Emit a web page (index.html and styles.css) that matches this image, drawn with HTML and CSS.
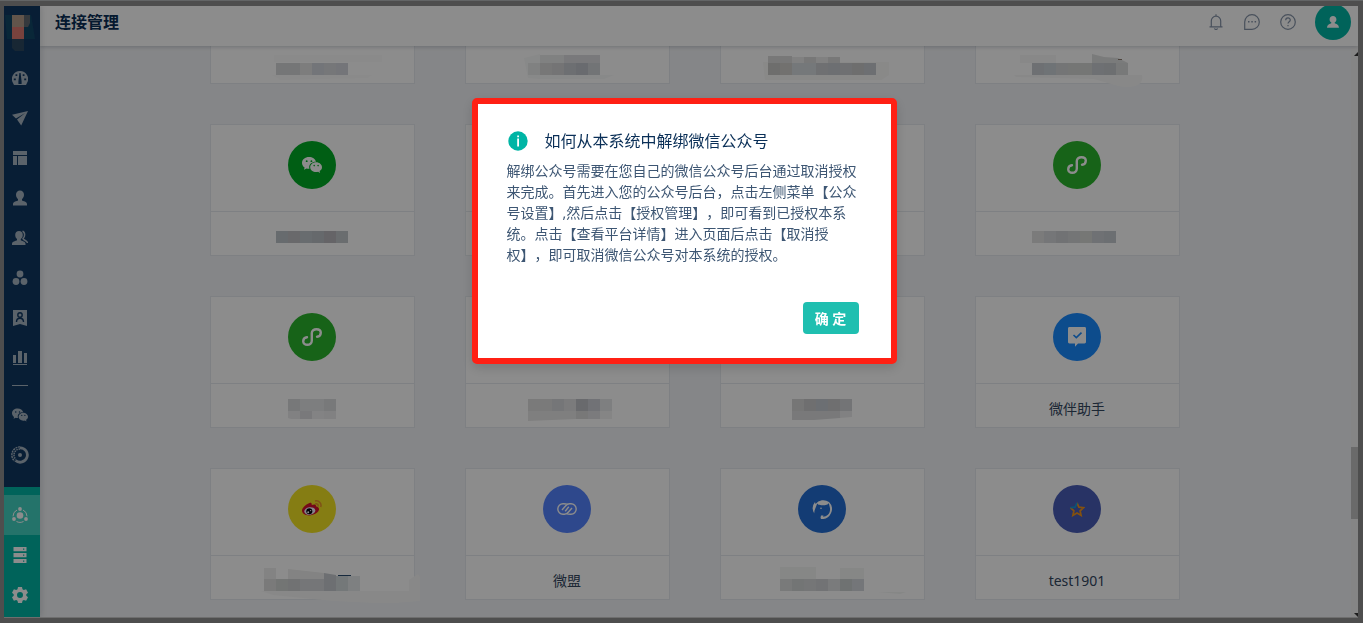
FILE: index.html
```html
<!DOCTYPE html>
<html lang="zh-CN">
<head>
<meta charset="utf-8">
<title>连接管理</title>
<link rel="stylesheet" href="styles.css">
</head>
<body>
<svg class="defs" width="0" height="0" aria-hidden="true">
  <symbol id="wechat" viewBox="0 0 20 20">
    <path fill="currentColor" fill-rule="evenodd" d="M7 2C3.100 2 0 4.600 0 7.900c0 1.900 1 3.500 2.600 4.600L2 14.800l2.600-1.400c.8.200 1.600.4 2.400.4h.5A5.600 5.600 0 0 1 7.200 12c0-3 2.900-5.300 6.400-5.300h.4C13.300 4 10.500 2 7 2ZM4.700 5.200a.9.900 0 1 1 0 1.900.9.900 0 0 1 0-1.900Zm4.700 0a.9.900 0 1 1 0 1.900.9.900 0 0 1 0-1.900ZM20 12.200c0-2.700-2.700-4.900-5.900-4.900s-5.900 2.200-5.900 4.900 2.700 4.900 5.900 4.900c.7 0 1.400-.1 2-.3l2 1.200-.5-2c1.500-.9 2.400-2.200 2.400-3.800Zm-7.800-2.400a.8.800 0 1 1 0 1.600.8.800 0 0 1 0-1.600Zm3.900 0a.8.800 0 1 1 0 1.600.8.800 0 0 1 0-1.600Z"/>
  </symbol>
  <symbol id="mini" viewBox="0 0 20 20">
    <path fill="none" stroke="currentColor" stroke-width="2.400" stroke-linecap="round" d="M5 10.200a4.200 4.200 0 0 0-3.800 4C1.200 16.300 3 17.800 5.300 17.800s4.500-1.500 4.500-4V6c0-2.300 2.100-3.800 4.600-3.800 2.400 0 4.400 1.300 4.400 3.500a4.200 4.200 0 0 1-3.800 4"/>
  </symbol>
</svg>
<div class="app">
  <nav class="sidebar" aria-label="主导航">
    <a class="logo" href="#" aria-label="首页">
      <svg width="32" height="38" viewBox="0 0 32 38"><path fill="#124767" d="M1 1h26l4 24H3Z"/><path fill="#b39b89" d="M8 1h12v12H8Z"/><path fill="#62696f" d="M20 1h6v8l-2 4h-4Z"/><path fill="#da786f" d="M8 13h12v12H8Z"/><path fill="#2c475f" d="M8 25h12v12h-9l-3-3Z"/></svg>
    </a>
    <div class="menu">
      <a href="#" aria-label="仪表盘"><svg width="16" height="16" viewBox="0 0 16 16"><path fill="currentColor" fill-rule="evenodd" d="M8 1a8 8 0 0 0-7 12l1 2h12l1-2A8 8 0 0 0 8 1ZM7.400 3h1.200l1 8.500V14H6.400v-2.500ZM3.500 4.200h1.800V6H3.500Zm7.200 0h1.800V6h-1.800ZM1.800 8.500h2v1.800h-2Zm10.400 0h2v1.800h-2Z"/></svg></a>
      <a href="#" aria-label="推送"><svg width="16" height="16" viewBox="0 0 16 16"><path fill="currentColor" d="M16 1 0 4.800l4 3.700L13.200 3 5 9.500l4.200 6Z"/></svg></a>
      <a href="#" aria-label="页面"><svg width="16" height="16" viewBox="0 0 16 16"><path fill="currentColor" d="M1 1h14v4H1ZM1 6h4v9H1ZM6 6h9v9H6Z"/></svg></a>
      <a href="#" aria-label="联系人"><svg width="16" height="16" viewBox="0 0 16 16"><path fill="currentColor" d="M8 0.500c2.300 0 4 1.700 4 4.300 0 2-.9 3.500-2 4.400v1.300c1 .8 5 1 5 3.500v1.500H1V14c0-2.500 4-2.700 5-3.500V9.200c-1.100-.9-2-2.400-2-4.400C4 2.200 5.700.5 8 .5Z"/></svg></a>
      <a href="#" aria-label="群组"><svg width="16" height="16" viewBox="0 0 16 16"><path fill="currentColor" d="M7 1c2.200 0 3.800 1.500 3.800 4 0 1.900-.8 3.300-2 4v1.300c1 .8 4.700 1.200 4.700 3.500V15H0v-1.200C0 11.500 4 11 5 10.300V9C4 8.300 3.200 6.900 3.200 5 3.200 2.500 4.800 1 7 1Z"/><path fill="none" stroke="currentColor" stroke-width="1.500" d="M10.500 1.200c3 1 2.500 5.800.5 7.300.5 2 4 1.500 4.500 4.500"/></svg></a>
      <a href="#" aria-label="分组"><svg width="16" height="16" viewBox="0 0 16 16" fill="currentColor"><circle cx="8" cy="4" r="3.400"/><circle cx="4" cy="11.500" r="3.400"/><circle cx="12" cy="11.500" r="3.400"/></svg></a>
      <a href="#" aria-label="会员"><svg width="16" height="16" viewBox="0 0 16 16"><path fill="currentColor" d="M1 0h14v16l-7-2-7 2Z"/><g fill="none" stroke="#0f3862" stroke-width="1.400"><circle cx="8" cy="5" r="2.200"/><path d="M4.500 12c0-5 7-5 7 0M9 8l2 2"/></g></svg></a>
      <a href="#" aria-label="统计"><svg width="16" height="16" viewBox="0 0 16 16"><path fill="currentColor" d="M1 5h3v8H1ZM6 1h4v12H6ZM12 3h3v10h-3ZM1 14h14v1H1Z"/></svg></a>
      <hr>
      <a href="#" aria-label="微信"><svg width="16" height="16"><use href="#wechat"/></svg></a>
      <a href="#" aria-label="应用"><svg width="18" height="18" viewBox="0 0 18 18" fill="none" stroke="currentColor"><path stroke-width="2.800" d="M9 1.800a7.200 7.200 0 1 1-4.500 12.700"/><path stroke-width="1.400" stroke-dasharray="2 .7" d="M9 .9a8.100 8.100 0 0 0-5.500 14.100"/><path stroke-width="1.500" stroke-dasharray="1.500 .8" d="M9 3a6 6 0 0 0-4 10.500"/><circle cx="9" cy="9" r="2" fill="currentColor" stroke="none"/></svg></a>
    </div>
    <div class="menu menu-settings">
      <a class="active" href="#" aria-label="连接管理"><svg width="16" height="16" viewBox="0 0 16 16" fill="currentColor"><circle cx="8" cy="8.500" r="3.300"/><circle cx="8" cy="2" r="1.900"/><circle cx="2" cy="12" r="1.900"/><circle cx="14" cy="12" r="1.900"/><path fill="none" stroke="currentColor" d="M5 3A7 7 0 0 0 1 9.300M11 3a7 7 0 0 1 4 6.300M4.500 14.500c2.200 1.200 4.800 1.200 7 0"/></svg></a>
      <a href="#" aria-label="数据"><svg width="16" height="16" viewBox="0 0 16 16"><path fill="currentColor" fill-rule="evenodd" d="M1.500 0h13v4.200h-13Zm9.500 1.500v1.300h1.300V1.500ZM1.500 6h13v4.200h-13ZM11 7.500v1.300h1.300V7.500ZM1.500 12h13v4h-13Zm9.500 1.400v1.300h1.300v-1.300Z"/></svg></a>
      <a href="#" aria-label="设置"><svg width="16" height="16" viewBox="0 0 16 16"><path fill="currentColor" fill-rule="evenodd" d="M6 0h4l.5 2.300 1.300.8 2.300-.8 1.900 3.400L14.300 7.300v1.400L16 10.300l-1.900 3.400-2.300-.8-1.300.8L10 16H6l-.5-2.300-1.300-.8-2.300.8L0 10.300l1.700-1.600V7.300L0 5.700l1.900-3.400 2.300.8 1.300-.8ZM8 5a3 3 0 1 0 0 6 3 3 0 0 0 0-6Z"/></svg></a>
    </div>
  </nav>

  <div class="page">
    <header class="topbar">
      <h1>连接管理</h1>
      <div class="tools">
        <button type="button" aria-label="通知"><svg width="16" height="16" viewBox="0 0 16 16"><path d="M3.300 12.500V7A4.700 4.700 0 0 1 8 2.200 4.700 4.700 0 0 1 12.700 7v5.500M1.500 12.800h13M6.300 14.500a2 2 0 0 0 3.400 0M8 .3v2"/></svg></button>
        <button type="button" aria-label="消息"><svg width="16" height="16" viewBox="0 0 16 16"><path d="M.7 15.300V8A7.300 7.300 0 1 1 8 15.300Z"/><path stroke-width="1.500" d="M4 7.800h1.500M7.300 7.800h1.500M10.600 7.800h1.500"/></svg></button>
        <button type="button" aria-label="帮助"><svg width="16" height="16" viewBox="0 0 16 16"><circle cx="8" cy="8" r="7.300"/><path d="M5.700 6.300C5.700 3.200 10.300 3.200 10.300 6c0 1.700-2.300 1.900-2.300 3.600M8 11v1.300"/></svg></button>
        <button class="avatar" type="button" aria-label="账号"><svg width="14" height="14" viewBox="0 0 16 16"><path fill="currentColor" stroke="none" d="M8 1c2.300 0 3.900 1.600 3.900 4 0 1.500-.8 2.700-1.900 3.400v1c1.300.7 4.800 1.600 4.800 5.100H1.200c0-3.500 3.500-4.400 4.800-5.100v-1C4.900 7.700 4.100 6.500 4.100 5c0-2.400 1.600-4 3.900-4Z"/></svg></button>
      </div>
    </header>

    <div class="body">
      <main class="content">
        <div class="grid">
          <article class="card"><div class="card-top"></div><div class="card-foot">
            <svg class="mosaic" viewBox="0 0 203 43"><path fill="#fcfcfc" d="M63 15h108v7H63ZM61 35h100l-5 3-50 1-36 1Z"/><path fill="#d6d7d9" d="M65 23h24v12H65Z"/><path fill="#e3e3e3" d="M89 23h12v12H89Z"/><path fill="#d2d5dc" d="M101 23h12v12h-12Z"/><path fill="#d8d9dd" d="M113 23h12v12h-12Z"/><path fill="#d3d5dc" d="M125 23h12v12h-12Z"/></svg></div></article>
          <article class="card"><div class="card-top"></div><div class="card-foot">
            <svg class="mosaic" viewBox="0 0 203 43"><path fill="#f8f9f9" d="M58 18l16-4v25l-12-1ZM74 35h74l-10 4H74Z"/><path fill="#e9ebeb" d="M62 23h12v12H62ZM74 15h24v8H74Z"/><path fill="#d9d9d9" d="M74 23h12v12H74Z"/><path fill="#d3d4d5" d="M86 23h12v12H86Z"/><path fill="#dcdde0" d="M98 15h36v8H98Z"/><path fill="#c7cacf" d="M98 23h12v12H98Z"/><path fill="#bfc3cb" d="M110 23h12v12h-12Z"/><path fill="#d0d3d8" d="M122 23h12v12h-12Z"/></svg></div></article>
          <article class="card"><div class="card-top"></div><div class="card-foot">
            <svg class="mosaic" viewBox="0 0 203 43"><path fill="#f9f9f8" d="M42 22h126v13l-8 5H44Z"/><path fill="#dadada" d="M47 16h24v7H47ZM83 17h12v6H83ZM107 17h12v6h-12Z"/><path fill="#ececec" d="M71 17h12v6H71ZM95 17h12v6H95Z"/><path fill="#c8c8c7" d="M47 23h12v12H47Z"/><path fill="#cfcecb" d="M59 23h12v12H59Z"/><path fill="#d5dade" d="M71 23h12v12H71ZM83 23h12v12H83Z"/><path fill="#cbcdd0" d="M95 23h12v12H95ZM119 23h12v12h-12Z"/><path fill="#c6cbd0" d="M107 23h12v12h-12ZM143 23h12v12h-12Z"/><path fill="#c8c9c9" d="M131 23h12v12h-12Z"/></svg></div></article>
          <article class="card"><div class="card-top"></div><div class="card-foot">
            <svg class="mosaic" viewBox="0 0 203 43"><path fill="#f8f8f8" d="M38 35h128c2 10-7 14-24 11l-24-7-78-2ZM44 15h36v8H44Z"/><path fill="#dfe0e0" d="m116 14 12 3 14 1 10 5h-36Z"/><path fill="#c9ccd1" d="M56 23h12v12H56ZM116 23h12v12h-12Z"/><path fill="#cbd2d7" d="M68 23h12v12H68Z"/><path fill="#d3d5d8" d="M80 23h12v12H80Z"/><path fill="#d5d7d6" d="M92 23h24v12H92Z"/><path fill="#c7cace" d="M128 23h12v12h-12Z"/><path fill="#dadcdd" d="M140 23h12v12h-12Z"/><path fill="#8b7a70" d="M142 19h4v1h-4Z"/></svg></div></article>

          <article class="card"><div class="card-top"><span class="badge green"><svg width="20" height="20"><use href="#wechat"/></svg></span></div><div class="card-foot">
            <svg class="mosaic" viewBox="0 0 203 43"><path fill="#bcc3c8" d="M65 19h12v12H65Z"/><path fill="#bfbfc4" d="M77 19h12v12H77Z"/><path fill="#bdc5ca" d="M89 19h12v12H89Z"/><path fill="#bac0c5" d="M101 19h12v12h-12Z"/><path fill="#b9b7bc" d="M113 19h12v12h-12Z"/><path fill="#c1c7ca" d="M125 19h12v12h-12Z"/></svg></div></article>
          <article class="card"><div class="card-top"></div><div class="card-foot"></div></article>
          <article class="card"><div class="card-top"></div><div class="card-foot"></div></article>
          <article class="card"><div class="card-top"><span class="badge leaf"><svg width="20" height="20"><use href="#mini"/></svg></span></div><div class="card-foot">
            <svg class="mosaic" viewBox="0 0 203 43"><path fill="#e0e0e0" d="M56 19h12v12H56Z"/><path fill="#d5d7da" d="M68 19h12v12H68Z"/><path fill="#ced0d3" d="M80 19h12v12H80Z"/><path fill="#d3d5d7" d="M92 19h12v12H92Z"/><path fill="#d7d9d6" d="M104 19h12v12h-12Z"/><path fill="#cbced3" d="M116 19h12v12h-12Z"/><path fill="#c5cad0" d="M128 19h12v12h-12Z"/></svg></div></article>

          <article class="card"><div class="card-top"><span class="badge leaf"><svg width="20" height="20"><use href="#mini"/></svg></span></div><div class="card-foot">
            <svg class="mosaic" viewBox="0 0 203 43"><path fill="#d9dadd" d="M77 15h12v12H77Z"/><path fill="#e4e5e7" d="M89 15h24v12H89Z"/><path fill="#dadcdf" d="M113 15h12v12h-12Z"/><path fill="#ebebed" d="M77 27h12v8h-9l-3-1ZM113 27h12v8h-12Z"/><path fill="#dcdde1" d="M89 27h12v8H89Z"/><path fill="#efeff0" d="M101 27h12v8h-12Z"/></svg></div></article>
          <article class="card"><div class="card-top"></div><div class="card-foot">
            <svg class="mosaic" viewBox="0 0 203 43"><path fill="#dededf" d="M62 15h24v12H62Z"/><path fill="#d6d8da" d="M86 15h12v12H86Z"/><path fill="#e0e1e2" d="M98 15h12v12H98Z"/><path fill="#c0c1c7" d="M110 15h12v12h-12Z"/><path fill="#ced0d7" d="M122 15h12v12h-12Z"/><path fill="#e6e7ea" d="M134 15h12v12h-12Z"/><path fill="#e8e8e8" d="M62 27h48v8l-48 2Z"/><path fill="#dadadb" d="M110 27h12v8h-12Z"/><path fill="#e1e1e4" d="M122 27h12v8h-12Z"/><path fill="#f2f2f3" d="M134 27h12v8h-12Z"/></svg></div></article>
          <article class="card"><div class="card-top"></div><div class="card-foot">
            <svg class="mosaic" viewBox="0 0 203 43"><path fill="#d7d8d8" d="M71 15h12v12H71Z"/><path fill="#cacbcd" d="M83 15h12v12H83Z"/><path fill="#c5cbd2" d="M95 15h12v12H95Z"/><path fill="#cacbcc" d="M107 15h12v12h-12Z"/><path fill="#d2d4d7" d="M119 15h12v12h-12Z"/><path fill="#dcdddf" d="M71 27h48v7l-26 2H71Z"/><path fill="#ececed" d="M119 27h12v6l-12 1Z"/></svg></div></article>
          <article class="card"><div class="card-top"><span class="badge azure"><svg width="20" height="20" viewBox="0 0 20 20"><path fill="currentColor" d="M2.500 0h15C18.600 0 19 .7 19 1.600v13.200c0 1.100-.6 1.600-1.500 1.600H11l-3 3.400v-3.400H2.500c-1 0-1.500-.5-1.500-1.600V1.600C1 .6 1.500 0 2.500 0Z"/><path fill="none" stroke="#198aff" stroke-width="1.600" d="m6.500 8 2.800 2.600 5.200-5"/></svg></span></div><div class="card-foot"><span>微伴助手</span></div></article>

          <article class="card"><div class="card-top"><span class="badge yellow"><svg width="20" height="20" viewBox="0 0 20 20"><path fill="#d5112e" d="M6.500 4.500c2-1.500 3.700-.7 3.200 1.500 2.500-1 4.800-.6 4.200 1.300 4.800 1.300 3.600 5-.2 7.300C8 18 0 16.400 0 11.500c0-2.500 3-5.300 6.500-7Z"/><ellipse cx="7.800" cy="12" rx="5.600" ry="3.700" fill="#f0f2ff" transform="rotate(-8 7.800 12)"/><circle cx="7.300" cy="12.200" r="3" fill="#050510"/><circle cx="6.200" cy="13.300" r="1" fill="#fff"/><circle cx="8.600" cy="11.600" r=".7" fill="#fff"/><path fill="none" stroke="#e9942b" stroke-width="1.500" d="M13 2c4-.8 7 2.500 5.700 6M13.300 4.800c2-.4 3.300 1 2.700 2.700"/></svg></span></div><div class="card-foot">
            <svg class="mosaic" viewBox="0 0 203 43"><path fill="#f8f8f8" d="M50 35h148V24l9-6 2 3v24l-25 2h-20l-42-2-60-6Z"/><path fill="#efefee" d="M53 12h12v11H53ZM77 13l36 4v6H77Z"/><path fill="#dfdfdf" d="M53 23h12v12H53Z"/><path fill="#d1d5d3" d="M65 23h12v12H65Z"/><path fill="#ced0d2" d="M77 23h12v12H77Z"/><path fill="#d6d8db" d="M89 23h24v12H89Z"/><path fill="#c7cbd0" d="M113 17l12 2v16h-12Z"/><path fill="#d4dadd" d="M125 20h12v15h-12Z"/><path fill="#e6e9eb" d="M137 20h12v15h-12Z"/><path fill="#294b70" d="M127 19h13v1h-13Z"/></svg></div></article>
          <article class="card"><div class="card-top"><span class="badge royal"><svg width="20" height="20" viewBox="0 0 20 20"><g fill="none" stroke="currentColor" stroke-width="1.400"><path d="M10.500 5.400C9 4.700 7.500 4.800 6 4.800a5.200 5.200 0 0 0 0 10.400h1.500c2 0 3-1 4-2.200L15 9M9.500 14.600c1.500.7 3 .6 4.500.6a5.200 5.200 0 0 0 0-10.400h-1.500c-2 0-3 1-4 2.200L5 11M8.200 12.200l3.600-4.400"/></g></svg></span></div><div class="card-foot"><span>微盟</span></div></article>
          <article class="card"><div class="card-top"><span class="badge navy"><svg width="20" height="20" viewBox="0 0 20 20"><path fill="currentColor" d="M2.300 14.500A10 10 0 0 1 3 3l.5 2A10 10 0 0 1 17 3a10 10 0 0 1-8 17l-.5-1.300.5-2.200h2.500l-.5 1.300c4-.2 7.500-3 7-8.500L16.800 4c-.5 1.200-1.200 1.500-2.300 1.800-2.500.8-5 .7-7 0-1 .1-1.500-.5-2.300-1.400L3.500 9c-1 2.200-1.400 4-1.200 5.500Z"/><circle cx="9" cy="9.200" r=".8" fill="currentColor"/></svg></span></div><div class="card-foot">
            <svg class="mosaic" viewBox="0 0 203 43"><path fill="#f4f6f5" d="M59 11h36v12H59ZM119 12h24v11h-24ZM157 36h28l-6 2Z"/><path fill="#dcdfdf" d="M59 23h12v12H59Z"/><path fill="#d2d5d6" d="M71 23h12v12H71Z"/><path fill="#d6d8d9" d="M83 23h12v12H83Z"/><path fill="#cfd2d5" d="M95 23h12v12H95Z"/><path fill="#dee0e2" d="M107 23h12v12h-12Z"/><path fill="#cbd0cf" d="M119 23h12v12h-12Z"/><path fill="#d3d8dc" d="M131 23h12v12h-12Z"/></svg></div></article>
          <article class="card"><div class="card-top"><span class="badge indigo"><svg width="16" height="16" viewBox="0 0 16 16" fill="none" stroke-width="1.700"><path stroke="#f29418" d="m8 1.800 1.900 4.300 4.700.5-3.500 3.200 1 4.600L8 12l-4.100 2.400 1-4.600-3.500-3.200"/><path stroke="#1297d8" d="m1.400 6.600 4.700-.5L8 1.800"/></svg></span></div><div class="card-foot"><span>test1901</span></div></article>
        </div>
      </main>
      <div class="scrollbar" aria-hidden="true"><i class="arrow-up"></i><i class="thumb"></i><i class="arrow-down"></i></div>
    </div>
  </div>
</div>

<div class="overlay">
  <section class="dialog" role="dialog" aria-modal="true" aria-labelledby="dialog-title">
    <div class="dialog-head">
      <svg width="20" height="20" viewBox="0 0 20 20" aria-hidden="true"><circle cx="10" cy="10" r="9.700" fill="#00b5a5"/><path fill="#fff" d="M9.200 4.500h1.800v1.800H9.200ZM9.200 7.500h1.800v8H9.200Z"/></svg>
      <h2 id="dialog-title">如何从本系统中解绑微信公众号</h2>
    </div>
    <p>解绑公众号需要在您自己的微信公众号后台通过取消授权来完成。首先进入您的公众号后台，点击左侧菜单【公众号设置】,然后点击【授权管理】，即可看到已授权本系统。点击【查看平台详情】进入页面后点击【取消授权】，即可取消微信公众号对本系统的授权。</p>
    <div class="dialog-foot"><button class="confirm" type="button">确 定</button></div>
  </section>
</div>
</body>
</html>
```
FILE: styles.css
```css
* { box-sizing: border-box; }

body {
  margin: 0;
  height: 100vh;
  padding: 5px 5px 5px 4px;
  overflow: hidden;
  background: #8f8f8f;
  border-top: 1px solid #b4b8ba;
  font: 14px/21px "Noto Sans", "Noto Sans CJK SC", sans-serif;
  color: #33475f;
}

h1, h2, p { margin: 0; }
button { border: 0; padding: 0; background: none; font: inherit; color: inherit; }
svg { display: block; }
.defs { position: absolute; }

.app { display: flex; height: 100%; overflow: hidden; border-bottom: 1px solid #c8c8c8; }

/* Sidebar */
.sidebar {
  display: flex;
  flex-direction: column;
  width: 36px;
  flex: none;
  background: #0f3862;
  color: #a7b4c1;
  z-index: 2;
  box-shadow: 1px 0 6px rgba(0, 21, 41, .15);
}
.logo { height: 52px; flex: none; padding: 8px 0 0; }
.menu a {
  display: flex;
  align-items: center;
  justify-content: center;
  height: 40px;
  padding-right: 4px;
  color: inherit;
}
.menu hr { width: 16px; height: 1px; margin: 7px 12px 9px 8px; border: 0; background: #a7b4c1; }
.menu-settings {
  flex: none;
  margin-top: auto;
  padding: 8px 0 2px;
  background: #00b5a5;
  color: #fff;
}
.menu-settings .active { background: #43d1c1; }

/* Page */
.page { display: flex; flex-direction: column; flex: 1; min-width: 0; }
.topbar {
  display: flex;
  align-items: center;
  justify-content: space-between;
  height: 40px;
  flex: none;
  padding: 0 7px 8px 15px;
  background: #fff;
  box-shadow: 0 1px 4px rgba(0, 21, 41, .2);
  z-index: 1;
}
.topbar h1 { font-size: 16px; line-height: 24px; font-weight: 600; color: #0a2f57; }
.tools { display: flex; align-items: center; gap: 20px; }
.tools svg { fill: none; stroke: #8593a8; stroke-width: 1.2; }
.tools .avatar {
  display: flex;
  align-items: center;
  justify-content: center;
  width: 36px;
  height: 36px;
  margin-left: -1px;
  border-radius: 50%;
  background: #00b5a5;
  color: #fff;
}

.body { display: flex; flex: 1; min-height: 0; }
.content {
  display: flex;
  flex-direction: column;
  justify-content: flex-end;
  flex: 1;
  min-width: 0;
  padding: 0 21px 17px 19px;
  overflow: hidden;
  background: #f2f4f7;
}
.grid {
  display: grid;
  grid-template-columns: repeat(4, 1fr);
  gap: 40px 50px;
  width: 100%;
  max-width: 970px;
  margin: 0 auto;
}
.card { height: 132px; border: 1px solid #e6eaee; background: #fff; }
.card-top {
  display: flex;
  justify-content: center;
  height: 87px;
  padding-top: 16px;
  border-bottom: 1px solid #e6eaee;
}
.card-foot { height: 43px; text-align: center; }
.card-foot span { display: block; padding-top: 14px; }
.mosaic { width: 100%; height: 43px; overflow: visible; }

.badge {
  display: flex;
  align-items: center;
  justify-content: center;
  width: 48px;
  height: 48px;
  border-radius: 50%;
  color: #fff;
}
.green { background: #00ac26; }
.leaf { background: #2bb52d; }
.azure { background: #198aff; }
.yellow { background: #f2e324; }
.royal { background: #5483ff; }
.navy { background: #236dd3; }
.indigo { background: #495db9; }

.scrollbar {
  display: flex;
  flex-direction: column;
  align-items: flex-end;
  width: 7px;
  padding-top: 6px;
  background: #f3f3f3;
}
.arrow-up { border: 2px solid transparent; border-right-color: #333; border-bottom-color: #333; }
.arrow-down { margin: auto 0 0; border: 2px solid transparent; border-right-color: #333; border-top-color: #333; }
.thumb { width: 7px; height: 72px; margin-top: 391px; background: #c1c1c1; }

/* Dialog */
.overlay {
  position: fixed;
  inset: 0;
  z-index: 10;
  display: flex;
  align-items: flex-start;
  justify-content: center;
  padding: 98px 0 0 5px;
  background: rgba(0, 0, 0, .45);
}
.dialog {
  width: 425px;
  padding: 25px 32px 24px 29px;
  border: 6px solid #ff2014;
  border-radius: 5px;
  background: #fff;
  box-shadow: 0 4px 12px rgba(0, 0, 0, .15);
}
.dialog-head { display: flex; align-items: center; gap: 17px; padding-left: 1px; }
.dialog-head h2 { font-size: 16px; line-height: 24px; font-weight: 400; color: #0a2f57; }
.dialog p { margin-top: 7px; text-spacing-trim: space-all; color: #3d5673; }
.dialog-foot { display: flex; justify-content: flex-end; margin-top: 37px; }
.confirm {
  width: 56px;
  height: 32px;
  border-radius: 4px;
  background: #1fbfb0;
  color: #fff;
  font-weight: 600;
}
```
